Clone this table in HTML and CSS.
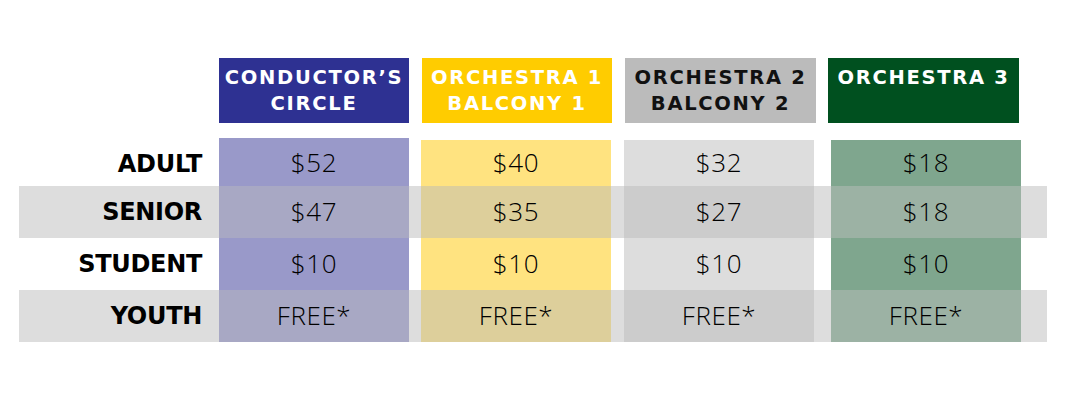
FILE: index.html
```html
<!DOCTYPE html>
<html>
<head>
<meta charset="utf-8">
<link rel="stylesheet" href="styles.css">
</head>
<body>
<div class="chart">
  <div class="head">
    <div class="hspace"></div>
    <div class="hcell h-blue">CONDUCTOR’S<br>CIRCLE</div>
    <div class="hcell h-yellow">ORCHESTRA 1<br>BALCONY 1</div>
    <div class="hcell h-gray">ORCHESTRA 2<br>BALCONY 2</div>
    <div class="hcell h-green">ORCHESTRA 3</div>
  </div>
  <div class="rows">
    <div class="row first">
      <div class="label">ADULT</div>
      <div class="cell c-blue">$52</div>
      <div class="cell c-yellow">$40</div>
      <div class="cell c-gray">$32</div>
      <div class="cell c-green">$18</div>
    </div>
    <div class="row band">
      <div class="label">SENIOR</div>
      <div class="cell c-blue">$47</div>
      <div class="cell c-yellow">$35</div>
      <div class="cell c-gray">$27</div>
      <div class="cell c-green">$18</div>
    </div>
    <div class="row">
      <div class="label">STUDENT</div>
      <div class="cell c-blue">$10</div>
      <div class="cell c-yellow">$10</div>
      <div class="cell c-gray">$10</div>
      <div class="cell c-green">$10</div>
    </div>
    <div class="row band">
      <div class="label">YOUTH</div>
      <div class="cell c-blue">FREE*</div>
      <div class="cell c-yellow">FREE*</div>
      <div class="cell c-gray">FREE*</div>
      <div class="cell c-green">FREE*</div>
    </div>
  </div>
</div>
</body>
</html>
```

FILE: styles.css
```css
html, body {
  margin: 0;
  padding: 0;
  background: #ffffff;
}

.chart {
  margin-left: 19px;
  padding-top: 58px;
  width: 1028px;
  font-family: "DejaVu Sans", "Liberation Sans", sans-serif;
}

.head {
  display: grid;
  grid-template-columns: 200px 190px 190px 191px 191px;
  height: 65px;
}

.hcell {
  box-sizing: border-box;
  padding-top: 7px;
  text-align: center;
  font-weight: bold;
  font-size: 19.5px;
  line-height: 26px;
  letter-spacing: 1.7px;
  color: #ffffff;
}

.h-blue { background: #2e3192; }
.h-yellow { background: #ffcc00; margin-left: 13px; width: 190px; }
.h-gray { background: #bbbbbb; color: #111111; margin-left: 26px; width: 191px; }
.h-green { background: #00501f; margin-left: 38px; width: 191px; }

.rows {
  margin-top: 15px;
}

.row {
  display: flex;
  height: 52px;
}

.row.first {
  height: 48px;
}

.row.band {
  background: #dddddd;
}

.label {
  box-sizing: border-box;
  width: 200px;
  padding-right: 17px;
  display: flex;
  align-items: center;
  justify-content: flex-end;
  font-weight: bold;
  font-size: 24px;
  letter-spacing: -0.3px;
  color: #000000;
}

.cell {
  box-sizing: border-box;
  width: 190px;
  padding-bottom: 3px;
  display: flex;
  align-items: center;
  justify-content: center;
  font-family: "Open Sans", "DejaVu Sans", sans-serif;
  font-weight: 350;
  font-size: 26px;
  letter-spacing: 0.6px;
  color: #000000;
}

.first .label {
  padding-top: 4px;
}

.first .cell {
  padding-top: 3px;
}

.first .c-yellow,
.first .c-gray,
.first .c-green {
  margin-top: 2px;
  padding-top: 1px;
}

.c-blue { background: #9999c9; }
.c-yellow { background: #ffe380; margin-left: 12px; }
.c-gray { background: #dddddd; margin-left: 13px; }
.c-green { background: #7fa68e; margin-left: 17px; }

.band .c-blue { background: #a8a8c4; }
.band .c-yellow { background: #ddcf9b; }
.band .c-gray { background: #cccccc; }
.band .c-green { background: #9cb2a4; }
```
